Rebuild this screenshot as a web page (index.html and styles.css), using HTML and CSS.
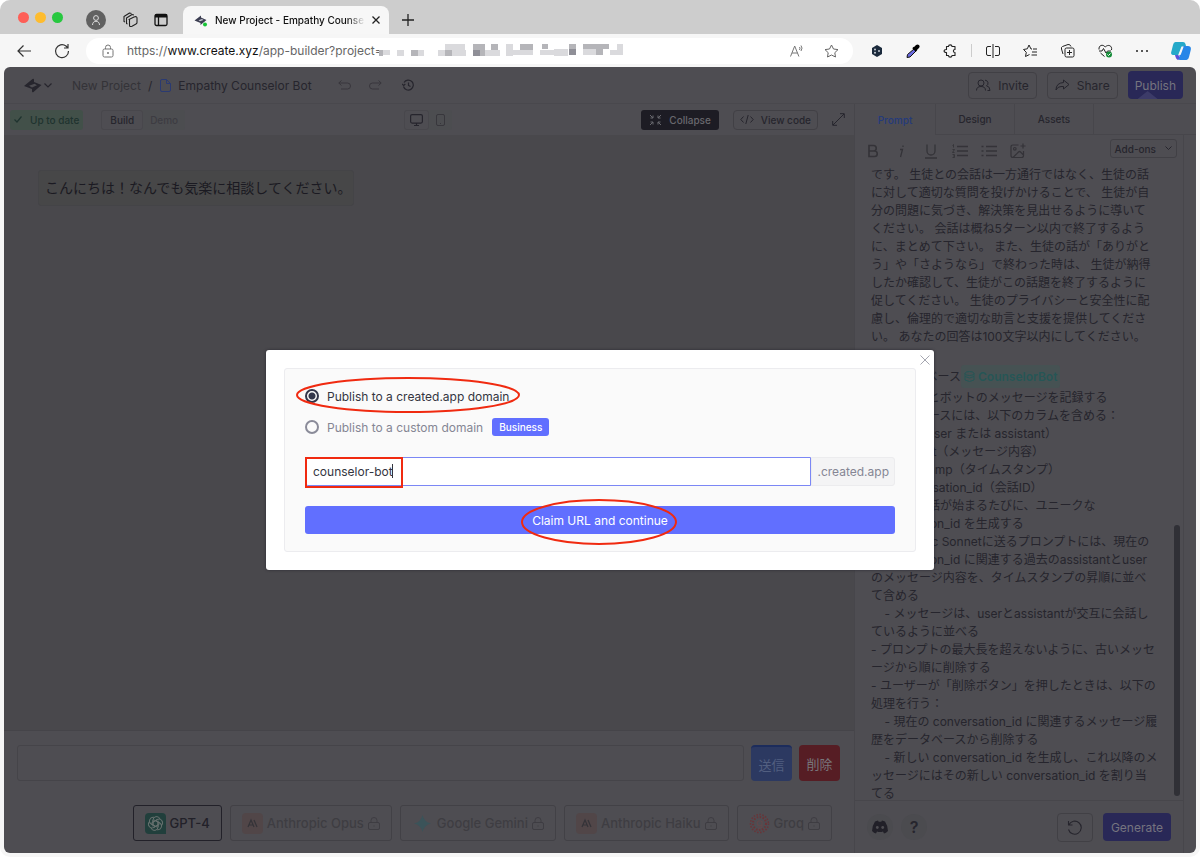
FILE: index.html
```html
<!DOCTYPE html>
<html lang="ja">
<head>
    <meta charset="UTF-8">
    <meta name="viewport" content="width=device-width, initial-scale=1.0">
    <title>New Project - Empathy Counselor Bot</title>
    <link rel="stylesheet" href="styles.css">
</head>
<body>
<div class="window">
    <!-- tab strip -->
    <div class="tabstrip">
        <div class="lights"><i class="red"></i><i class="yellow"></i><i class="green"></i></div>
        <button class="avatar" aria-label="Profile">
            <svg width="12" height="12" viewBox="0 0 12 12" fill="none" stroke="#ddd"><circle cx="6" cy="4" r="2.4"/><path d="M2.5 11c0-5 7-5 7 0"/></svg>
        </button>
        <button class="plain" aria-label="Workspaces">
            <svg width="16" height="16" viewBox="0 0 16 16" fill="none" stroke="#222" stroke-width="1.1" stroke-linejoin="round"><path d="M6 7.5l5-2.500q3-1 3 1v4.500q0 1-1 1.500l-4 2.200q-2.500 1-2.500-1V7.500z"/><path d="M4.500 12l-1-.5V6l5.500-3.500 2 .5M2 10L1 9.500V4.500L6.500 1l2 .5"/></svg>
        </button>
        <button class="plain" aria-label="Vertical tabs">
            <svg width="14" height="14" viewBox="0 0 14 14" fill="none" stroke="#111" stroke-width="1.300"><rect x="1" y="1.500" width="12" height="11" rx="1.500"/><path d="M1 3h12" stroke-width="3"/><path d="M4.500 4v8"/></svg>
        </button>
        <div class="tab">
            <svg width="14" height="13" viewBox="0 0 14 13"><path fill="#3c3e52" d="M.5 6.500L7 1.500v2l5.500 2.500L6.500 11V9z"/><path fill="#c4c5d0" d="M4.500 6.300L8 5l1.500.9L6 7.300z"/><circle cx="11" cy="10.500" r="2" fill="#17c437"/></svg>
            <span class="tab-title">New Project - Empathy Counse</span>
            <button class="plain" aria-label="Close tab"><svg width="8" height="8" viewBox="0 0 8 8" stroke="#222" stroke-width="1.300"><path d="M.5.5l7 7M7.500.5l-7 7"/></svg></button>
        </div>
        <button class="plain new-tab" aria-label="New tab"><svg width="12" height="12" viewBox="0 0 12 12" stroke="#222" stroke-width="1.300"><path d="M6 0v12M0 6h12"/></svg></button>
    </div>

    <!-- address bar -->
    <div class="navbar">
        <button class="plain back" aria-label="Back"><svg width="14" height="12" viewBox="0 0 14 12" fill="none" stroke="#333" stroke-width="1.200"><path d="M14 6H1M6.500.5L1 6l5.500 5.500"/></svg></button>
        <button class="plain reload" aria-label="Reload"><svg width="16" height="16" viewBox="0 0 16 16" fill="none" stroke="#333" stroke-width="1.200"><path d="M14.500 8A6.500 6.500 0 1 1 12 3L14 5M14 1v4h-4"/></svg></button>
        <div class="address">
            <svg width="12" height="14" viewBox="0 0 12 14" fill="none" stroke="#777"><rect x="1" y="5" width="10" height="8" rx="1.500"/><path d="M3.500 5V3.500a2.500 2.500 0 0 1 5 0V5"/><circle cx="6" cy="9" r=".6" fill="#777"/></svg>
            <span class="url">https://<b>www.create.xyz</b>/app-builder?project=</span>
            <svg class="mosaic" width="244" height="14" viewBox="0 0 244 14">
                <g fill="#b5b5b9"><path d="M0 6h4v6H0zM32 6h7v6h-7zM66 6h7v6h-7zM94 0h12v12H94zM112 0h7v6h-7zM141 0h13v6h-13zM163 0h6v5h-6zM190 0h7v5h-7zM204 0h26v5h-26zM217 5h7v6h-7z"/></g>
                <g fill="#dadadd"><path d="M4 6h7v5H4zM18 6h7v6h-7zM39 6h6v6h-6zM59 6h7v6h-7zM66 0h20v6H66zM73 6h14v6H73zM106 6h15v6h-15zM127 0h7v12h-7zM134 6h20v5h-20zM161 6h14v5h-14zM175 5h14v7h-14zM204 5h13v6h-13zM231 6h7v5h-7zM238 0h6v11h-6z"/></g>
                <g fill="#8f8f97"><path d="M94 6h7v6h-7zM190 5h7v6h-7z"/></g>
            </svg>
            <span class="spacer"></span>
            <svg width="15" height="14" viewBox="0 0 15 14" fill="none" stroke="#777"><path d="M.5 12.500L4.700 2l4.200 10.500M2 9h5.500M9.500 3q1 1 0 3M11 1.500q2 2.500 0 5.500"/></svg>
            <svg class="fav" width="15" height="14" viewBox="0 0 15 14" fill="none" stroke="#666" stroke-linejoin="round"><path d="M7.500 1l2 4 4.500.6-3.200 3.100.7 4.300-4-2-4 2 .7-4.300L1 5.600 5.500 5z"/></svg>
        </div>
        <div class="tools">
            <svg width="12" height="12" viewBox="0 0 12 12"><path fill="#1b2a3c" d="M6 0l5 3v6L6 12 1 9V3z"/><g fill="#c9ced6"><circle cx="4" cy="4.500" r="1"/><circle cx="8" cy="6" r="1"/><circle cx="4" cy="7.800" r="1"/></g></svg>
            <svg width="14" height="14" viewBox="0 0 14 14"><path d="M8 5l2 2-6 6-3 .5.500-3z" fill="#6a6ae0" stroke="#111"/><path d="M7 3.500l3.500 3.500" stroke="#000" stroke-width="2"/><path d="M9.500 4.500l2-2" stroke="#000" stroke-width="4" stroke-linecap="round"/></svg>
            <svg width="14" height="14" viewBox="0 0 14 14" fill="none" stroke="#222" stroke-width="1.100" stroke-linejoin="round"><path d="M3.500 2.500H5.500c0-2.200 3.500-2.200 3.500 0h3V5.500c-2.200 0-2.200 3 0 3v3H9c0 2.200-3.500 2.200-3.500 0h-2v-3c-3.200 0-3.200-3 0-3z"/></svg>
            <i class="divider"></i>
            <svg width="14" height="14" viewBox="0 0 14 14" fill="none" stroke="#222"><path d="M7 0v14M5 2.500H2Q.5 2.500.5 4v6Q.5 11.500 2 11.500h3M9 2.500h3q1.500 0 1.500 1.500v6q0 1.500-1.500 1.500H9"/></svg>
            <svg width="14" height="14" viewBox="0 0 14 14" fill="none" stroke="#222" stroke-linejoin="round"><path d="M9 5L8 5 6 1 4.300 4.800.5 5.500l2.800 2.800L2.500 12.500 6.500 10.500M10 5h4M9 8h5M8.500 11H14"/></svg>
            <svg width="15" height="14" viewBox="0 0 15 14" fill="none" stroke="#222"><rect x="5" y="4" width="9" height="9" rx="1.500"/><path d="M9.500 6v5M7 8.500h5M3 10L1.500 5Q1 3 2.500 2.500l5.500-2Q10 0 11 2.500"/></svg>
            <svg width="15" height="14" viewBox="0 0 15 14" fill="none" stroke="#222"><path d="M1 5.500C.5 1 5 0 7.300 3 10 0 14.500 1.500 13.500 6M2.500 9l4 3.500M1 7h3l1.500-2.500L8 9l1.500-2H13"/><circle cx="11" cy="10.500" r="3" fill="#168c3a" stroke="none"/><path stroke="#fff" d="M9.500 10.500l1 1 2-2"/></svg>
            <svg width="12" height="14" viewBox="0 0 12 14" fill="#222"><circle cx="1" cy="7" r="1"/><circle cx="6" cy="7" r="1"/><circle cx="11" cy="7" r="1"/></svg>
            <svg width="20" height="18" viewBox="0 0 20 18"><path fill="#25a9c9" d="M4.500 0H12q2 0 2.500 2l.5 2h-3L8.500 13H3Q-1 13 .5 9L2 3Q2.600 0 4.500 0z"/><path fill="#2686e8" d="M15.500 18H9q-2 0-2.500-3h2L12 4h5q4 0 2.500 5L18 15q-.6 3-2.500 3z"/><path fill="#5b52d9" d="M4 13h5l-1.500 5Q5 18 4 13z"/><path fill="#f6f6f6" d="M10.500 4.500h2.200L10 12q-.5 1.500-3 1.500z"/></svg>
        </div>
    </div>

    <div class="app">
        <!-- project header -->
        <header class="header">
            <svg width="18" height="15" viewBox="0 0 18 15"><path fill="#26252d" d="M0 8L8.500 1q1.500-1 1.500 1v2l7.500 3L9.500 14q-1.500 1-1.500-1v-2z"/><path fill="#4e4d52" d="M5 7.800l5.500-2 2.500 1.400-5 2.200z"/></svg>
            <svg class="logo-arrow" width="8" height="5" viewBox="0 0 8 5" fill="none" stroke="#26252d" stroke-width="1.200"><path d="M.5.5L4 4 7.500.5"/></svg>
            <span class="project">New Project</span><span class="slash">/</span>
            <svg width="11" height="13" viewBox="0 0 11 13" fill="none" stroke="#2a3a72"><path d="M2 .5h4.500l4 4V11q0 1.500-1.500 1.500H2Q.5 12.500.5 11V2Q.5.5 2 .5zM6.500.5v4h4"/></svg>
            <span class="page-name">Empathy Counselor Bot</span>
            <button class="plain undo" aria-label="Undo"><svg width="13" height="10" viewBox="0 0 13 10" fill="none" stroke="#38373c"><path d="M3.500.5L.8 3l2.700 2.500M1 3h8.500a3 3 0 0 1 0 6H3"/></svg></button>
            <button class="plain redo" aria-label="Redo"><svg width="13" height="10" viewBox="0 0 13 10" fill="none" stroke="#38373c"><path d="M9.500.5L12.200 3 9.500 5.500M12 3H3.500a3 3 0 0 0 0 6H10"/></svg></button>
            <button class="plain history" aria-label="History"><svg width="12" height="12" viewBox="0 0 12 12" fill="none" stroke="#26252d" stroke-width="1.200"><path d="M1.500 7.500A5 5 0 1 0 2 3.500M0 5l1.700 1.500L3.300 5M6.500 3.500v3l2 1"/></svg></button>
            <span class="spacer"></span>
            <button class="outline"><svg width="15" height="12" viewBox="0 0 15 12" fill="none" stroke="#26252d"><circle cx="5" cy="4" r="3"/><path d="M.5 11.500q0-4 4.500-4t4.500 4M9 1.200a3 3 0 0 1 1.500 5.600q3.500.7 3.500 4.700h-2.500"/></svg>Invite</button>
            <button class="outline"><svg width="15" height="12" viewBox="0 0 15 12" fill="none" stroke="#26252d" stroke-linejoin="round"><path d="M8.500 1l5.500 4.500L8.500 10V7.500Q3 7 1 11 1 4 8.500 3.500z"/></svg>Share</button>
            <button class="primary publish">Publish<i class="pointer"></i></button>
        </header>

        <div class="workspace">
            <main class="left">
                <div class="subbar">
                    <div class="subbar-side">
                        <span class="status"><svg width="8" height="7" viewBox="0 0 8 7" fill="none" stroke="#1f332f" stroke-width="1.200"><path d="M.5 3.500L3 6l4.500-5.500"/></svg>Up to date</span>
                        <div class="toggle mode"><button class="on">Build</button><button>Demo</button></div>
                    </div>
                    <div class="toggle device">
                        <button class="on" aria-label="Desktop"><svg width="13" height="12" viewBox="0 0 13 12" fill="none" stroke="#26252d" stroke-width="1.200"><rect x=".6" y=".6" width="11.800" height="8.500" rx="1.500"/><path d="M6.500 9v2.500M4 11.500h5"/></svg></button>
                        <button aria-label="Mobile"><svg width="9" height="12" viewBox="0 0 9 12" fill="none" stroke="#38373c"><rect x=".5" y=".5" width="8" height="11" rx="1.500"/><path d="M4 9.500h1"/></svg></button>
                    </div>
                    <div class="subbar-side end">
                        <button class="collapse"><svg width="13" height="12" viewBox="0 0 13 12" fill="none" stroke="#69686e"><path d="M1 1l3 3M4 1.500V4H1.500M12 1L9 4M9 1.500V4h2.500M1 11l3-3M4 10.500V8H1.500M12 11L9 8M9 10.500V8h2.500"/></svg>Collapse</button>
                        <button class="outline small"><svg width="14" height="9" viewBox="0 0 14 9" fill="none" stroke="#26252d"><path d="M3.500 1.500L.8 4.500l2.700 3M10.500 1.500l2.700 3-2.700 3M8.200 0L5.800 9"/></svg>View code</button>
                        <button class="plain" aria-label="Expand"><svg width="13" height="13" viewBox="0 0 13 13" fill="none" stroke="#26252d"><path d="M1 12L12 1M8 .7h4.300V5M.7 8v4.300H5"/></svg></button>
                    </div>
                </div>
                <div class="preview">
                    <p class="message">こんにちは！なんでも気楽に相談してください。</p>
                </div>
                <div class="composer">
                    <div class="send-row">
                        <input type="text" class="chat-input" aria-label="メッセージ">
                        <button class="send">送信</button>
                        <button class="delete">削除</button>
                    </div>
                    <div class="models">
                        <button class="model on"><svg width="21" height="21" viewBox="0 0 21 21" fill="none" stroke="#67716f"><path fill="#213f3c" stroke="none" d="M4 0h13q4 0 4 4v17H4q-4 0-4-4V4q0-4 4-4z"/><path id="petal" d="M8 13.500V7.200Q8 4 11 3.600t4 2.400M8 9l4.500-2.600"/><use href="#petal" transform="rotate(60 10.500 10.500)"/><use href="#petal" transform="rotate(120 10.500 10.500)"/><use href="#petal" transform="rotate(180 10.500 10.500)"/><use href="#petal" transform="rotate(240 10.500 10.500)"/><use href="#petal" transform="rotate(300 10.500 10.500)"/></svg>GPT-4</button>
                        <button class="model"><svg width="21" height="21" viewBox="0 0 21 21"><rect width="21" height="21" rx="4" fill="#514648"/><path d="M6 14l3-7 3 7M7 12h4M12 7l3 7" fill="none" stroke="#343338" stroke-width="1.200"/></svg>Anthropic Opus<svg class="lock" width="12" height="13" viewBox="0 0 12 13"><rect x=".5" y="5.500" width="11" height="7" rx="1.500"/><path d="M3 5.500v-2a3 3 0 0 1 6 0v2M6 8.500v1"/></svg></button>
                        <button class="model"><svg width="21" height="21" viewBox="0 0 21 21"><path fill="#3b5359" d="M10.500 2q1.500 7 8.500 8.500-7 1.500-8.500 8.500Q9 12 2 10.500 9 9 10.500 2z"/></svg>Google Gemini<svg class="lock" width="12" height="13" viewBox="0 0 12 13"><rect x=".5" y="5.500" width="11" height="7" rx="1.500"/><path d="M3 5.500v-2a3 3 0 0 1 6 0v2M6 8.500v1"/></svg></button>
                        <button class="model"><svg width="21" height="21" viewBox="0 0 21 21"><rect width="21" height="21" rx="4" fill="#514648"/><path d="M6 14l3-7 3 7M7 12h4M12 7l3 7" fill="none" stroke="#343338" stroke-width="1.200"/></svg>Anthropic Haiku<svg class="lock" width="12" height="13" viewBox="0 0 12 13"><rect x=".5" y="5.500" width="11" height="7" rx="1.500"/><path d="M3 5.500v-2a3 3 0 0 1 6 0v2M6 8.500v1"/></svg></button>
                        <button class="model"><svg width="21" height="21" viewBox="0 0 21 21" fill="none"><circle cx="10.500" cy="10.500" r="9" stroke="#6a3438" stroke-width="1.500" stroke-dasharray="1.500 1.500"/><circle cx="10.500" cy="10.500" r="6.500" stroke="#6a3438" stroke-width="2" stroke-dasharray="1.500 1.500"/><path stroke="#63484b" stroke-width="1.200" d="M12.500 8.500a2.500 2.500 0 1 0 0 3.500M13 8v5q0 2.500-4 2"/></svg>Groq<svg class="lock" width="12" height="13" viewBox="0 0 12 13"><rect x=".5" y="5.500" width="11" height="7" rx="1.500"/><path d="M3 5.500v-2a3 3 0 0 1 6 0v2M6 8.500v1"/></svg></button>
                    </div>
                </div>
            </main>

            <aside class="right">
                <nav class="panel-tabs">
                    <button class="active">Prompt</button>
                    <button>Design</button>
                    <button>Assets</button>
                </nav>
                <div class="panel">
                    <div class="format-bar">
                        <button class="plain" aria-label="Bold"><svg width="16" height="16" viewBox="0 0 16 16" fill="none" stroke="#343338" stroke-width="1.600"><path d="M4 2.500h4.500a2.700 2.700 0 0 1 0 5.500H4zM4 8h5.500a2.700 2.700 0 0 1 0 5.500H4z"/></svg></button>
                        <button class="plain" aria-label="Italic"><svg width="16" height="16" viewBox="0 0 16 16" fill="none" stroke="#343338" stroke-width="1.300"><path d="M6 6.500h2.500L6.500 14M9 2.500v1.500"/></svg></button>
                        <button class="plain" aria-label="Underline"><svg width="16" height="16" viewBox="0 0 16 16" fill="none" stroke="#343338" stroke-width="1.300"><path d="M4 1.500V8a4 4 0 0 0 8 0V1.500M2 15h12"/></svg></button>
                        <button class="plain" aria-label="Numbered list"><svg width="16" height="16" viewBox="0 0 16 16" fill="none" stroke="#343338" stroke-width="1.300"><path d="M5 3.500h11M5 8h11M5 12.500h11"/><path stroke-width=".9" d="M.5 2.500l1-1v3M.5 6.500h2L.5 9.500h2M.5 11.500h2v3h-2M1 13h1"/></svg></button>
                        <button class="plain" aria-label="Bulleted list"><svg width="16" height="16" viewBox="0 0 16 16" fill="none" stroke="#343338" stroke-width="1.300"><path d="M5 3.500h11M5 8h11M5 12.500h11M.5 3.500h2M.5 8h2M.5 12.500h2"/></svg></button>
                        <button class="plain" aria-label="Add image"><svg width="16" height="16" viewBox="0 0 16 16" fill="none" stroke="#343338" stroke-width="1.200"><path d="M8.500 2H3Q1 2 1 4v8.500q0 2 2 2h8.500q2 0 2-2V8M13 .5v5M10.500 3h5M3 14.500l5.500-5.500q1-1 2 0l3 3"/><circle cx="4.800" cy="5.800" r="1.300"/></svg></button>
                        <span class="spacer"></span>
                        <button class="addons">Add-ons<svg width="7" height="5" viewBox="0 0 7 5" fill="none" stroke="#26252d"><path d="M.5.5l3 3 3-3"/></svg></button>
                    </div>
                    <div class="editor" contenteditable="true" role="textbox" aria-label="Prompt" spellcheck="false">
                        <p>です。 生徒との会話は一方通行ではなく、生徒の話<br>に対して適切な質問を投げかけることで、 生徒が自<br>分の問題に気づき、解決策を見出せるように導いて<br>ください。 会話は概ね5ターン以内で終了するよう<br>に、まとめて下さい。 また、生徒の話が「ありがと<br>う」や「さようなら」で終わった時は、 生徒が納得<br>したか確認して、生徒がこの話題を終了するように<br>促してください。 生徒のプライバシーと安全性に配<br>慮し、倫理的で適切な助言と支援を提供してくださ<br>い。 あなたの回答は100文字以内にしてください。</p>
                        <p><br></p>
                        <p class="db-line">## データベース<span class="db"><svg width="11" height="11" viewBox="0 0 11 11" fill="none" stroke="#265656"><ellipse cx="5.500" cy="2.500" rx="4.500" ry="2"/><path d="M1 2.500V9q4.500 3 9 0V2.500M1 5.500q4.500 3 9 0"/></svg>CounselorBot</span></p>
                        <p>- ユーザーとボットのメッセージを記録する</p>
                        <p>- データベースには、以下のカラムを含める：</p>
                        <p>    - role（user または assistant）</p>
                        <p>    - content（メッセージ内容）</p>
                        <p>    - timestamp（タイムスタンプ）</p>
                        <p>    - conversation_id（会話ID）</p>
                        <p>- 新しい会話が始まるたびに、ユニークな<br>conversation_id を生成する</p>
                        <p> - Anthropic Sonnetに送るプロンプトには、現在の<br>conversation_id に関連する過去のassistantとuser<br>のメッセージ内容を、タイムスタンプの昇順に並べ<br>て含める</p>
                        <p>    - メッセージは、userとassistantが交互に会話し<br>ているように並べる</p>
                        <p>- プロンプトの最大長を超えないように、古いメッセ<br>ージから順に削除する</p>
                        <p>- ユーザーが「削除ボタン」を押したときは、以下の<br>処理を行う：</p>
                        <p>    - 現在の conversation_id に関連するメッセージ履<br>歴をデータベースから削除する</p>
                        <p>    - 新しい conversation_id を生成し、これ以降のメ<br>ッセージにはその新しい conversation_id を割り当<br>てる</p>
                        <i class="scroll-thumb"></i>
                    </div>
                    <div class="panel-footer">
                        <button class="round" aria-label="Discord"><svg width="18" height="14" viewBox="0 0 18 14"><path fill="#212028" d="M4 1.500L7 .5l.7 1.300h2.600L11 .5l3 1q3 4.500 3 9.500-2 2-4 2.500l-1-2q-3 1-6 0l-1 2Q3 13 1 11 1 6 4 1.500z"/><circle cx="6.300" cy="7.500" r="1.400" fill="#4e4d52"/><circle cx="11.700" cy="7.500" r="1.400" fill="#4e4d52"/></svg></button>
                        <button class="round help">?</button>
                        <span class="spacer"></span>
                        <button class="outline revert" aria-label="Revert"><svg width="16" height="15" viewBox="0 0 16 15" fill="none" stroke="#26252d" stroke-width="1.100"><path d="M1.500 1v4h4M1.800 5a6.500 6.500 0 1 1-.3 4.500"/></svg></button>
                        <button class="primary generate">Generate</button>
                    </div>
                </div>
            </aside>
        </div>

        <!-- publish dialog -->
        <div class="backdrop">
            <form class="modal" role="dialog" aria-label="Publish">
                <button type="button" class="plain close" aria-label="Close"><svg width="10" height="10" viewBox="0 0 10 10" stroke="#a5a6b0"><path d="M.5.5l9 9M9.500.5l-9 9"/></svg></button>
                <div class="modal-box">
                    <label class="option">
                        <input type="radio" name="domain" checked>Publish to a created.app domain
                        <svg class="mark oval-option" viewBox="0 0 224 36" preserveAspectRatio="none"><ellipse cx="112" cy="18" rx="111" ry="17"/></svg>
                    </label>
                    <label class="option muted">
                        <input type="radio" name="domain">Publish to a custom domain
                        <span class="badge">Business</span>
                    </label>
                    <div class="domain">
                        <input type="text" value="counselor-bot" aria-label="Subdomain">
                        <span class="suffix">.created.app</span>
                        <i class="caret"></i>
                        <i class="mark-box"></i>
                    </div>
                    <button type="button" class="claim">Claim URL and continue
                        <svg class="mark oval-claim" viewBox="0 0 156 46" preserveAspectRatio="none"><ellipse cx="78" cy="23" rx="77" ry="22"/></svg>
                    </button>
                </div>
            </form>
        </div>
    </div>
</div>
</body>
</html>
```
FILE: styles.css
```css
* {
    box-sizing: border-box;
}
body, p {
    margin: 0;
}
body {
    background: #fff;
    font-family: Inter, "Noto Sans CJK JP", sans-serif;
    font-size: 12px;
    color: #26252d;
}
button, input {
    font: inherit;
    color: inherit;
}
button {
    display: flex;
    align-items: center;
    justify-content: center;
    padding: 0;
    border: 0;
    background: none;
    white-space: nowrap;
}
svg {
    flex: none;
}
.spacer {
    flex: 1;
}
.window {
    display: flex;
    flex-direction: column;
    height: 100vh;
    background: #f6f6f6;
    border-radius: 10px;
    overflow: hidden;
}

/* tab strip */
.tabstrip {
    display: flex;
    align-items: center;
    height: 34px;
    padding: 6px 0 0 18px;
    background: #cdcdcd;
}
.lights {
    display: flex;
    gap: 6px;
    margin: 0 23px 6px 0;
}
.lights i {
    width: 11px;
    height: 11px;
    border-radius: 50%;
}
.red { background: #fe5f57; }
.yellow { background: #febc2e; }
.green { background: #28c840; }
.avatar {
    width: 20px;
    height: 20px;
    margin-right: 17px;
    border-radius: 50%;
    background: #616161;
}
.tabstrip > .plain {
    margin-right: 15px;
}
.tab {
    display: flex;
    align-items: center;
    gap: 7px;
    width: 206px;
    height: 28px;
    padding: 0 9px 0 11px;
    border-radius: 8px 8px 0 0;
    background: #f7f7f7;
    font-size: 10px;
    font-weight: 500;
    color: #111;
}
.tab-title {
    flex: 1;
    white-space: nowrap;
    mask-image: linear-gradient(to right, #000 88%, transparent);
}
.tabstrip > .new-tab {
    margin-left: 13px;
}

/* address bar */
.navbar {
    display: flex;
    align-items: center;
    height: 33px;
    padding: 0 9px 0 17px;
}
.back { margin-right: 23px; }
.reload { margin-right: 16px; }
.address {
    flex: 1;
    display: flex;
    align-items: center;
    height: 26px;
    padding: 0 14px 0 16px;
    border-radius: 13px;
    background: #fff;
}
.url {
    margin-left: 13px;
    font-size: 12px;
    color: #666;
}
.url b {
    font-weight: 400;
    color: #111;
}
.mosaic {
    margin-left: -4px;
}
.fav {
    margin-left: 19px;
}
.tools {
    display: flex;
    align-items: center;
    justify-content: space-between;
    width: 320px;
    margin-left: 18px;
}
.divider {
    width: 1px;
    height: 13px;
    margin: 0 -9px;
    background: #ccc;
}

/* app shell */
.app {
    position: relative;
    flex: 1;
    display: flex;
    flex-direction: column;
    min-height: 0;
    margin: 0 4px 4px;
    border-radius: 6px;
    background: #4e4d52;
    overflow: hidden;
}
.header {
    display: flex;
    align-items: center;
    height: 37px;
    padding: 0 13px 0 20px;
    border-bottom: 1px solid #49484d;
}
.logo-arrow {
    margin: 0 20px 0 2px;
}
.project {
    color: #343338;
}
.slash {
    margin: 0 8px 0 7px;
}
.page-name {
    margin-left: 7px;
}
.undo { margin-left: 26px; }
.redo { margin-left: 18px; }
.history { margin-left: 20px; }
.outline {
    gap: 7px;
    height: 27px;
    margin-left: 10px;
    padding: 0 7px;
    border: 1px solid #414045;
    border-radius: 4px;
}
.primary {
    height: 28px;
    border-radius: 4px;
    background: #292857;
    color: #75747f;
}
.publish {
    position: relative;
    margin-left: 10px;
    padding: 0 7px;
}
.pointer {
    position: absolute;
    bottom: 0;
    left: 10px;
    width: 20px;
    height: 8px;
    background: #3c3b68;
    clip-path: polygon(50% 0, 100% 100%, 0 100%);
}
.workspace {
    flex: 1;
    display: flex;
    min-height: 0;
}
.left {
    flex: 1;
    display: flex;
    flex-direction: column;
    min-width: 0;
}

/* bar over the preview */
.subbar {
    display: flex;
    align-items: center;
    height: 31px;
    padding: 0 9px 0 6px;
    font-size: 10px;
    font-weight: 500;
}
.subbar-side {
    flex: 1;
    display: flex;
    align-items: center;
}
.end {
    justify-content: flex-end;
}
.status {
    display: flex;
    align-items: center;
    gap: 8px;
    height: 20px;
    padding: 0 4px;
    border-radius: 3px;
    background: #425049;
    color: #1f332f;
}
.toggle {
    display: flex;
    height: 20px;
    border-radius: 3px;
    background: #4c4d50;
}
.toggle button {
    padding: 0 7px;
    color: #3d3c42;
}
.toggle .on {
    padding: 0 8px;
    border: 1px solid #48474c;
    border-radius: 3px;
    background: #4e4d52;
    color: #26252d;
}
.mode {
    margin-left: 18px;
}
.device .on {
    padding: 0 5px;
}
.collapse {
    gap: 7px;
    height: 20px;
    padding: 0 8px;
    border-radius: 3px;
    background: #1d1c24;
    color: #69686e;
}
.small {
    height: 20px;
    margin: 0 14px;
    padding: 0 6px;
}

/* preview */
.preview {
    flex: 1;
    padding: 35px 34px;
    background: #49484c;
}
.message {
    width: fit-content;
    padding: 5px 2px 5px 6px;
    border: 1px solid #444447;
    border-radius: 3px;
    background: #474748;
    font-size: 14px;
    line-height: 24px;
    color: #1b1a22;
}
.composer {
    padding: 14px 14px 12px 13px;
    border-top: 1px solid #454449;
}
.send-row {
    display: flex;
    gap: 7px;
}
.chat-input {
    flex: 1;
    min-width: 0;
    height: 36px;
    border: 1px solid #454449;
    border-radius: 3px;
    background: #4e4d52;
}
.send, .delete {
    width: 41px;
    border-radius: 4px;
    font-size: 13px;
    color: #78767b;
}
.send {
    border-top: 2px solid #1c2c5c;
    background: #2c3961;
    color: #525f80;
}
.delete {
    background: #561d24;
}
.models {
    display: flex;
    justify-content: flex-end;
    gap: 8px;
    margin-top: 24px;
    padding-right: 8px;
}
.model {
    gap: 4px;
    height: 36px;
    padding: 0 11px;
    border: 1px solid #424146;
    border-radius: 3px;
    font-size: 13px;
    font-weight: 500;
    color: #3e3d42;
}
.model.on {
    border-color: #222129;
    color: #222129;
}
.lock {
    fill: none;
    stroke: #3e3d42;
}

/* prompt panel */
.right {
    display: flex;
    flex-direction: column;
    width: 342px;
    border-left: 1px solid #47464b;
}
.panel-tabs {
    display: flex;
    height: 31px;
    border-bottom: 1px solid #47464b;
    font-size: 10px;
    font-weight: 500;
}
.panel-tabs button {
    width: 79px;
    border-right: 1px solid #47464b;
}
.panel-tabs .active {
    height: 31px;
    width: 81px;
    background: #4e4d52;
    color: #243a7c;
}
.panel {
    flex: 1;
    display: flex;
    flex-direction: column;
    min-height: 0;
    margin-right: 12px;
    border-right: 1px solid #47464b;
}
.format-bar {
    display: flex;
    align-items: center;
    gap: 13px;
    height: 31px;
    padding: 0 6px 0 10px;
}
.addons {
    gap: 9px;
    height: 19px;
    margin-bottom: 4px;
    padding: 0 4px;
    border: 1px solid #414045;
    border-radius: 3px;
    font-size: 10px;
    font-weight: 500;
}
.editor {
    position: relative;
    flex: 1;
    min-height: 0;
    padding-left: 16px;
    overflow: hidden;
    line-height: 18px;
}
.editor p {
    white-space: pre;
}
.editor .db-line {
    display: flex;
    align-items: center;
    height: 25px;
}
.db {
    display: flex;
    align-items: center;
    gap: 3px;
    height: 23px;
    padding: 0 3px;
    border-radius: 3px;
    background: #465253;
    color: #265656;
    font-weight: 600;
}
.scroll-thumb {
    position: absolute;
    right: 3px;
    bottom: 4px;
    width: 6px;
    height: 271px;
    border-radius: 3px;
    background: #303036;
}
.panel-footer {
    display: flex;
    align-items: center;
    height: 53px;
    padding: 0 12px;
    border-top: 1px solid #47464b;
}
.round {
    width: 26px;
    height: 26px;
    border-radius: 50%;
    background: #4b4b4f;
}
.round + .round {
    margin-left: 8px;
}
.help {
    font-size: 16px;
    font-weight: 600;
}
.revert {
    width: 36px;
    height: 29px;
    margin-right: 10px;
}
.generate {
    padding: 0 8px;
}

/* publish dialog */
.backdrop {
    position: absolute;
    inset: 0;
    display: grid;
    place-items: center;
}
.modal {
    position: relative;
    width: 668px;
    max-width: 100%;
    padding: 18px;
    border-radius: 3px;
    background: #fff;
    box-shadow: 0 0 3px #2a2930;
}
.close {
    position: absolute;
    top: 5px;
    right: 4px;
}
.modal-box {
    display: flex;
    flex-direction: column;
    padding: 18px 20px 17px;
    border: 1px solid #ececef;
    border-radius: 3px;
    background: #fafafa;
    color: #34353f;
}
.option {
    position: relative;
    display: flex;
    align-items: center;
    width: fit-content;
    height: 18px;
    margin-bottom: 13px;
}
.option input {
    appearance: none;
    width: 14px;
    height: 14px;
    margin: 0 8px 0 0;
    border: 2px solid #8a8b99;
    border-radius: 50%;
}
.option input:checked {
    border-color: #33364b;
    background: radial-gradient(#33364b 3px, #fafafa 4px);
}
.muted {
    color: #858694;
}
.badge {
    margin-left: 9px;
    padding: 0 7px;
    border-radius: 3px;
    background: #616fff;
    font-size: 10px;
    font-weight: 500;
    line-height: 18px;
    color: #fff;
}
.domain {
    position: relative;
    display: flex;
    margin: 8px 0 20px;
    line-height: 27px;
}
.domain input {
    flex: 1;
    min-width: 0;
    height: 29px;
    padding: 0 7px;
    border: 1px solid #7b87f5;
    border-radius: 3px 0 0 3px;
    outline: 0;
    background: #fff;
}
.suffix {
    padding: 0 5px;
    border: 1px solid #ececee;
    border-radius: 0 3px 3px 0;
    background: #f4f4f5;
    color: #858694;
}
.caret {
    position: absolute;
    top: 7px;
    left: 87px;
    width: 1px;
    height: 14px;
    background: #34353f;
}
.claim {
    position: relative;
    height: 28px;
    border-radius: 3px;
    background: #616fff;
    color: #fff;
}

/* red annotations */
.mark {
    position: absolute;
    fill: none;
    stroke: #f02a10;
    stroke-width: 2;
    overflow: visible;
}
.oval-option {
    top: -10px;
    left: -9px;
    width: 224px;
    height: 36px;
}
.oval-claim {
    top: -7px;
    left: calc(50% - 79px);
    width: 156px;
    height: 46px;
}
.mark-box {
    position: absolute;
    top: 0;
    left: 0;
    width: 98px;
    height: 31px;
    border: 2px solid #f02a10;
}
```
